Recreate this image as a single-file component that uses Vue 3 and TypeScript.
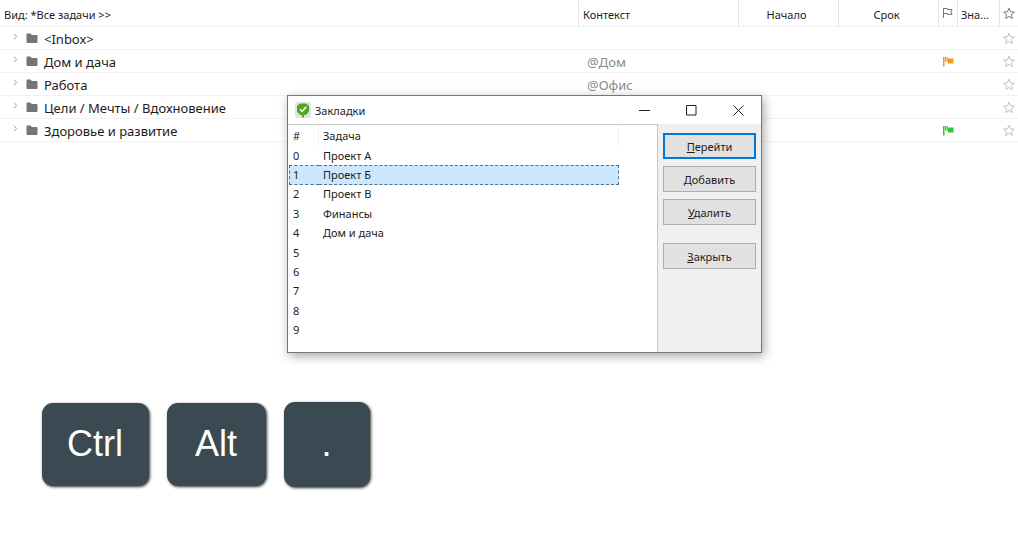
<script setup lang="ts">
import { ref } from 'vue'

interface Task {
  name: string
  context?: string
  flag?: string
}

const tasks: Task[] = [
  { name: '<Inbox>' },
  { name: 'Дом и дача', context: '@Дом', flag: 'orange' },
  { name: 'Работа', context: '@Офис' },
  { name: 'Цели / Мечты / Вдохновение' },
  { name: 'Здоровье и развитие', flag: 'green' },
]

const bookmarks: string[] = ['Проект А', 'Проект Б', 'Проект В', 'Финансы', 'Дом и дача', '', '', '', '', '']
const selected = ref(1)

const actions = [
  { key: 'П', rest: 'ерейти', kind: 'primary' },
  { key: 'Д', rest: 'обавить', kind: '' },
  { key: 'У', rest: 'далить', kind: '' },
  { key: 'З', rest: 'акрыть', kind: 'close' },
]

const keys = [
  { label: 'Ctrl', kind: 'wide' },
  { label: 'Alt', kind: 'medium' },
  { label: '.', kind: 'square' },
]

const starPath = 'M6 1.2 7.500 4.800l3.900.300-3 2.500.900 3.900L6 9.400l-3.300 2.100.900-3.900-3-2.500 3.900-.300z'
</script>

<template>
  <main class="app">
    <table class="tasks">
      <colgroup>
        <col />
        <col class="c-context" />
        <col class="c-date" />
        <col class="c-date" />
        <col class="c-icon" />
        <col class="c-marks" />
        <col class="c-icon" />
      </colgroup>
      <thead>
        <tr>
          <th class="view">Вид: *Все задачи &gt;&gt;</th>
          <th>Контекст</th>
          <th class="date">Начало</th>
          <th class="date">Срок</th>
          <th class="icon" aria-label="Флаг">
            <svg width="12" height="12" viewBox="0 0 12 12" fill="none" stroke="#777">
              <path d="M1.5 11V1.5h4v1h4.5l-1 2.5 1 2.5H5.5v-1h-4" />
            </svg>
          </th>
          <th class="marks">Зна...</th>
          <th class="icon" aria-label="Избранное">
            <svg class="star dark" width="12" height="13" viewBox="0 0 12 13"><path :d="starPath" /></svg>
          </th>
        </tr>
      </thead>
      <tbody>
        <tr v-for="task in tasks" :key="task.name">
          <td>
            <div class="task">
              <svg class="chevron" width="5" height="7" viewBox="0 0 5 7"><path d="M1 .8 3.700 3.500 1 6.200" /></svg>
              <svg class="folder" width="12" height="11" viewBox="0 0 12 11">
                <path d="M1.300.500h3.200l1.300 1.400h4.700q1 0 1 1v6.200q0 1-1 1h-9q-1 0-1-1V1.500q0-1 .800-1z" />
              </svg>
              <span>{{ task.name }}</span>
            </div>
          </td>
          <td class="context">{{ task.context }}</td>
          <td></td>
          <td></td>
          <td class="icon">
            <svg v-if="task.flag" :class="['flag', task.flag]" width="12" height="11" viewBox="0 0 12 11">
              <path d="M1 1h1.500v9.500H1zM3 1h1.200v4.500H3zM4.700 1h1.100v5H4.700zM6 2.500h5.500v5H6z" />
            </svg>
          </td>
          <td></td>
          <td class="icon">
            <svg class="star" width="12" height="13" viewBox="0 0 12 13"><path :d="starPath" /></svg>
          </td>
        </tr>
      </tbody>
    </table>

    <div class="keys">
      <kbd v-for="k in keys" :key="k.label" :class="k.kind">{{ k.label }}</kbd>
    </div>

    <section class="dialog" role="dialog" aria-labelledby="dialog-title">
      <header>
        <svg class="logo" width="16" height="16" viewBox="0 0 16 16">
          <rect width="16" height="16" rx="2" fill="#e2e2e2" />
          <path d="M7.200 12h1.600v3.500H7.200z" fill="#9a5a2c" />
          <path d="M5 2h6l2.500 2v5.500L11 12.500H5L2.500 9.500V4z" fill="#4fa820" stroke="#4fa820" stroke-linejoin="round" />
          <path d="m5 7.300 2.200 2.200 4-4.800" fill="none" stroke="#fff" stroke-width="1.500" />
        </svg>
        <h1 id="dialog-title">Закладки</h1>
        <button class="win" aria-label="Свернуть">
          <svg width="11" height="11" viewBox="0 0 11 11"><path d="M0 5.500h11" /></svg>
        </button>
        <button class="win" aria-label="Развернуть">
          <svg width="11" height="11" viewBox="0 0 11 11"><path d="M.500.500h9.500v9.500H.500z" /></svg>
        </button>
        <button class="win" aria-label="Закрыть окно">
          <svg width="11" height="11" viewBox="0 0 11 11"><path d="m.500.500 10 10m0-10-10 10" /></svg>
        </button>
      </header>
      <div class="body">
        <div class="list">
          <table>
            <thead>
              <tr>
                <th class="num">#</th>
                <th>Задача</th>
              </tr>
            </thead>
            <tbody>
              <tr
                v-for="(name, i) in bookmarks"
                :key="i"
                :class="{ selected: i === selected }"
                @click="selected = i"
              >
                <td>{{ i }}</td>
                <td>{{ name }}</td>
              </tr>
            </tbody>
          </table>
        </div>
        <div class="actions">
          <button v-for="a in actions" :key="a.key" :class="a.kind"><u>{{ a.key }}</u>{{ a.rest }}</button>
        </div>
      </div>
    </section>
  </main>
</template>

<style>
body {
  margin: 0;
  background: #fff;
}
</style>

<style scoped>
.app {
  position: relative;
  min-height: 100vh;
  overflow: hidden;
  font-family: "Noto Sans", "Open Sans", sans-serif;
  font-size: 11px;
  color: #1c1c1c;
}

table {
  border-collapse: separate;
  border-spacing: 0;
  table-layout: fixed;
  width: 100%;
}

th,
td {
  padding: 0;
  font-weight: 400;
  text-align: left;
  white-space: nowrap;
}

svg {
  display: block;
}

.c-context { width: 160px; }
.c-date { width: 100px; }
.c-icon { width: 19px; }
.c-marks { width: 42px; }

.tasks th {
  box-sizing: border-box;
  height: 27px;
  padding: 2px 4px 0;
  border-bottom: 1px solid #f0f0f0;
  border-left: 1px solid #e6e6e6;
}

.tasks th.view {
  border-left: 0;
}

.tasks th.date {
  padding-right: 8px;
  text-align: center;
}

.tasks th.marks {
  padding: 2px 0 0 3px;
}

.tasks th.icon {
  padding: 0 0 0 3px;
}

.tasks td {
  box-sizing: border-box;
  height: 23px;
  border-bottom: 1px solid #f3f3f3;
  font-size: 13px;
  line-height: 20px;
}

.tasks td.context {
  padding: 2px 0 0 9px;
  color: #8a8a8a;
}

.tasks td.icon {
  padding-left: 4px;
}

.task {
  display: flex;
  align-items: center;
  padding-left: 13px;
}

.task span {
  padding: 2px 0 0 6px;
}

.chevron {
  margin: 0 8px 4px 0;
  fill: none;
  stroke: #999;
}

.folder {
  fill: #757575;
}

.star {
  fill: none;
  stroke: #c2c2c2;
}

.star.dark {
  stroke: #777;
}

.flag.orange { fill: #f7981d; }
.flag.green { fill: #32c832; }

.keys {
  display: flex;
  align-items: center;
  gap: 18px;
  margin: 260px 0 0 42px;
}

kbd {
  display: grid;
  place-items: center;
  box-sizing: border-box;
  height: 83px;
  padding: 0 1px 2px 0;
  border-radius: 11px;
  background: #3a4952;
  box-shadow: 1px 1px 3px rgba(0, 0, 0, 0.8);
  color: #fff;
  font-family: "Liberation Sans", Arial, sans-serif;
  font-size: 36px;
}

kbd.wide { width: 107px; }
kbd.medium { width: 99px; }
kbd.square { width: 86px; height: 85px; }

.dialog {
  position: absolute;
  top: 95px;
  left: 287px;
  width: 473px;
  border: 1px solid #777;
  background: #fff;
  box-shadow: 2px 3px 10px rgba(0, 0, 0, 0.35);
}

.dialog header {
  display: flex;
  align-items: center;
  height: 28px;
  padding-left: 7px;
}

.dialog h1 {
  flex: 1;
  margin: 0;
  padding-left: 4px;
  font-size: 11px;
  font-weight: 400;
}

button {
  padding: 0;
  color: inherit;
  font: inherit;
}

.win {
  display: grid;
  place-items: center;
  width: 47px;
  height: 28px;
  border: 0;
  background: none;
}

.win:last-child {
  width: 46px;
}

.win svg {
  fill: none;
  stroke: #222;
}

.body {
  display: flex;
  background: #f0f0f0;
}

.list {
  flex: 1;
  padding: 0 38px 12px 1px;
  border: solid #c8c8c8;
  border-width: 1px 1px 0 0;
  background: #fff;
}

.list table {
  height: 215px;
}

.list th {
  height: 21px;
  padding: 0 0 0 4px;
  border-right: 1px solid #f0f0f0;
}

.list th.num {
  width: 25px;
}

.list td {
  padding-left: 4px;
  border: 1px solid transparent;
  border-width: 1px 0;
  line-height: 16px;
}

.list td:first-child {
  padding-left: 3px;
  border-left-width: 1px;
}

.list td:last-child {
  border-right-width: 1px;
}

.list .selected td {
  border-color: #5c6f80;
  border-style: dashed;
  background: #cce8ff;
}

.actions {
  display: flex;
  flex-direction: column;
  width: 93px;
  gap: 7px;
  padding: 9px 5px 0;
}

.actions button {
  height: 26px;
  border: 1px solid #adadad;
  background: #e1e1e1;
}

.actions button.primary {
  border: 2px solid #0078d7;
}

.actions button.close {
  margin-top: 11px;
}
</style>
